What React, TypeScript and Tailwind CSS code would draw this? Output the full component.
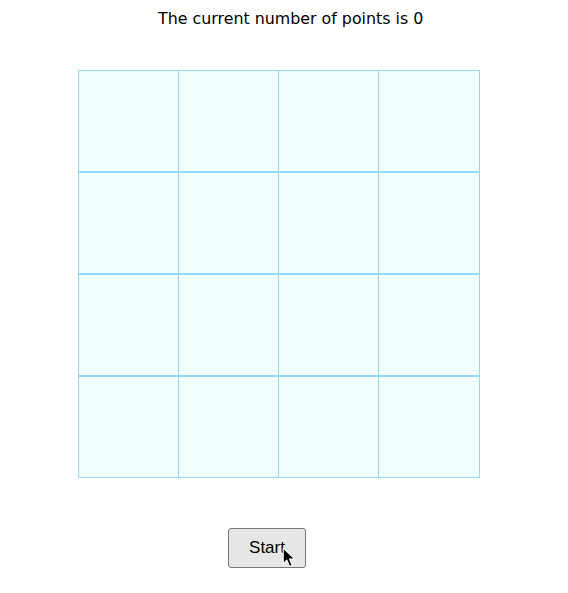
import React, { useState } from "react";

const SIZE = 4;

function Cell({ last }: { last: boolean }) {
  return (
    <div
      className={
        last
          ? "h-full flex-1 bg-[#f0ffff]"
          : "h-full w-[100px] border-r border-[#96d8fc] bg-[#f0ffff]"
      }
    />
  );
}

export default function App() {
  const [points] = useState(0);

  return (
    <div className="relative h-[593px] w-[568px] bg-white font-['Liberation_Sans',Arial,sans-serif] text-black">
      <p className="pl-[158px] pt-[9px] font-['DejaVu_Sans',sans-serif] text-[15.85px] leading-[20px]">
        The current number of points is {points}
      </p>

      <div className="ml-[78px] mt-[41px] flex w-[402px] flex-col">
        {Array.from({ length: SIZE }).map((_, r) => (
          <div key={r} className="flex h-[102px] w-[402px] border border-[#96d8fc]">
            {Array.from({ length: SIZE }).map((_, c) => (
              <Cell key={c} last={c === SIZE - 1} />
            ))}
          </div>
        ))}
      </div>

      <button
        type="button"
        className="ml-[228px] mt-[50px] h-[40px] w-[78px] rounded-[3px] border border-[#767676] bg-[#e6e6e6] text-[17px] text-black"
      >
        Start
      </button>

      {/* mouse pointer sitting over the button */}
      <svg
        className="absolute left-[282px] top-[547px]"
        width="14"
        height="21"
        viewBox="0 0 13 20"
      >
        <path
          d="M1 1 L1 16 L4.5 12.5 L7 18.5 L9.5 17.5 L7 11.5 L12 11.5 Z"
          fill="black"
          stroke="white"
          strokeWidth="1"
          strokeLinejoin="round"
        />
      </svg>
    </div>
  );
}
